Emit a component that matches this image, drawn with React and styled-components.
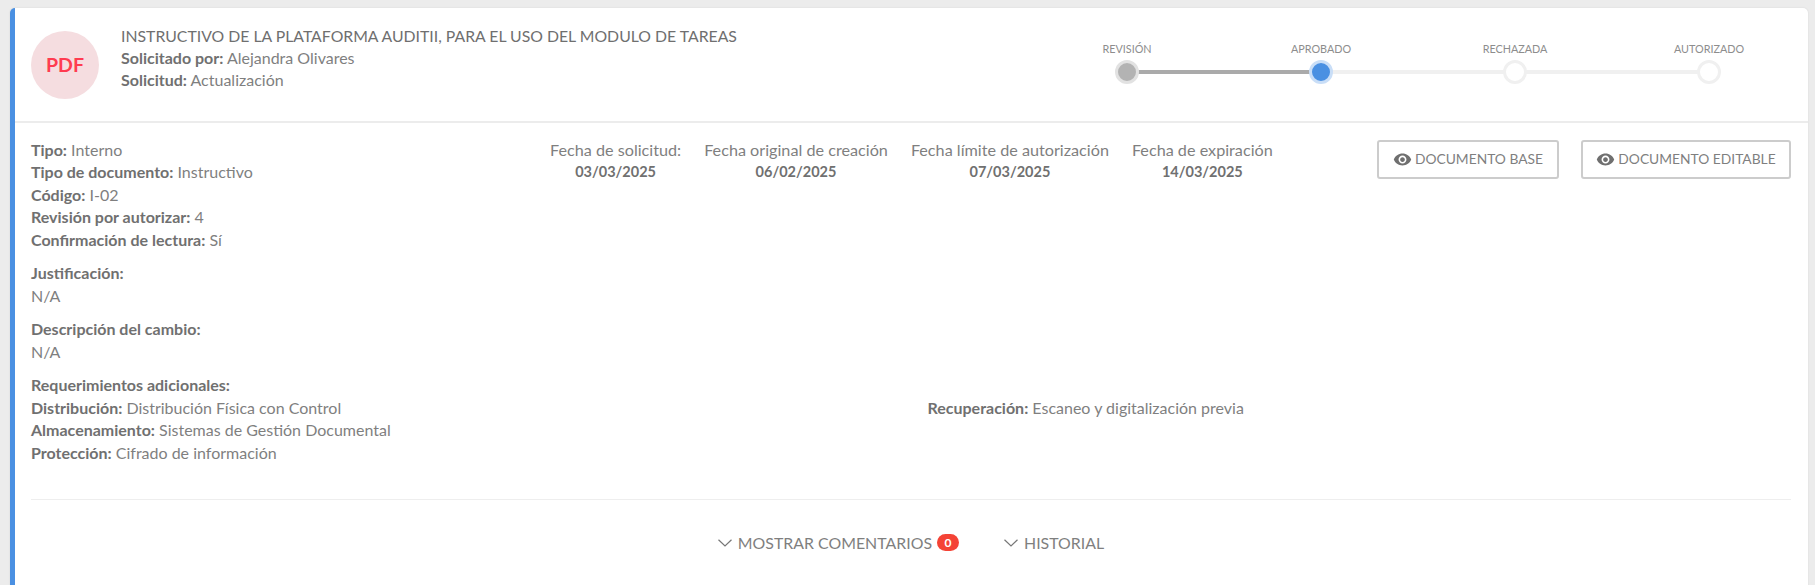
import React from 'react';
import styled, { createGlobalStyle } from 'styled-components';
import { MdRemoveRedEye } from 'react-icons/md';

const GlobalStyle = createGlobalStyle`
  html, body {
    margin: 0;
    height: 100%;
    overflow: hidden;
    background: #ececec;
    font-family: Lato, "Open Sans", sans-serif;
    font-size: 16px;
    line-height: 22.5px;
    color: #7f7f7f;
  }
`;

const Card = styled.section`
  margin: 8px 7px 0 10px;
  height: 600px;
  background: #fff;
  border-left: 5px solid #4a90e2;
  border-radius: 5px 5px 0 0;
  box-shadow: 0 0 2px rgba(0, 0, 0, 0.1);
`;

const Header = styled.header`
  padding: 17px 2px 0 16px;
  height: 96px;
  display: flex;
  border-bottom: 2px solid #ececec;
`;

const FileBadge = styled.div`
  width: 68px;
  height: 68px;
  margin: 6px 22px 0 0;
  border-radius: 50%;
  background: #f5dde0;
  color: #ff3b50;
  font-size: 19.5px;
  font-weight: 700;
  display: flex;
  align-items: center;
  justify-content: center;
`;

const Heading = styled.div`
  flex: 1;
  line-height: 22px;
`;

const Title = styled.div`
  color: #6f6f6f;
  font-size: 15.8px;
`;

const Label = styled.strong`
  color: #707070;
  font-weight: 700;
`;

const Stepper = styled.ol`
  list-style: none;
  margin: 0;
  padding: 16px 0 0;
  display: grid;
  grid-template-columns: repeat(4, 194px);
`;

const Step = styled.li`
  position: relative;
  display: flex;
  flex-direction: column;
  align-items: center;
  font-size: 10.8px;
  line-height: 16px;
  color: #8d8d8d;

  &::before {
    content: '';
    display: ${(props) => (props.last ? 'none' : 'block')};
    position: absolute;
    top: 29px;
    left: 50%;
    width: 100%;
    height: 4px;
    background: ${(props) => (props.done ? '#aaaaaa' : '#f0f0f0')};
  }
`;

const stepColors = {
  done: { fill: '#b3b3b3', ring: '#e2e2e2' },
  active: { fill: '#4a90e2', ring: '#c9def7' },
  idle: { fill: '#ffffff', ring: '#f0f0f0' },
};

const Dot = styled.span`
  position: relative;
  width: 18px;
  height: 18px;
  margin-top: 3px;
  border-radius: 50%;
  background: ${(props) => stepColors[props.state].fill};
  border: 3px solid ${(props) => stepColors[props.state].ring};
`;

const Body = styled.div`
  padding: 15.5px 17px 0 16px;
`;

const TopRow = styled.div`
  display: flex;
  align-items: flex-start;
`;

const InfoList = styled.div`
  width: 519px;
`;

const Dates = styled.div`
  display: flex;
  gap: 23px;
`;

const DateItem = styled.div`
  font-size: 16.2px;
  text-align: center;
`;

const DateValue = styled.div`
  color: #707070;
  font-size: 14.5px;
  font-weight: 700;
`;

const Actions = styled.div`
  margin-left: auto;
  margin-top: 1.5px;
  display: flex;
  gap: 22px;
`;

const OutlineButton = styled.button`
  height: 39px;
  padding: 0;
  width: ${(props) => props.w}px;
  border: 2px solid #cccccc;
  border-radius: 3px;
  background: #fff;
  color: #7f7f7f;
  font: inherit;
  font-size: 13.8px;
  display: flex;
  align-items: center;
  justify-content: center;
  gap: 3px;

  svg {
    font-size: 19px;
    color: #6f6f6f;
  }
`;

const Block = styled.div`
  margin-top: 11px;
`;

const TwoCols = styled.div`
  display: grid;
  grid-template-columns: 1fr 1fr;
  column-gap: 33px;
`;

const Divider = styled.hr`
  margin: 34.5px 0 0;
  border: 0;
  border-top: 1px solid #eeeeee;
`;

const Footer = styled.div`
  padding-top: 32px;
  display: flex;
  justify-content: center;
  gap: 45px;
`;

const Toggle = styled.button`
  padding: 0;
  border: 0;
  background: none;
  color: #7f7f7f;
  font: inherit;
  font-size: 15.9px;
  display: flex;
  align-items: center;
  gap: 6px;
`;

const CountBadge = styled.span`
  width: 22px;
  height: 17px;
  margin-left: -1px;
  border-radius: 9px;
  background: #f44336;
  color: #fff;
  font-size: 12px;
  font-weight: 700;
  line-height: 17px;
  text-align: center;
`;

function Chevron() {
  return (
    <svg width="14" height="8" viewBox="0 0 14 8" fill="none" stroke="#777" strokeWidth="1.2">
      <path d="M0.5 0.8 L7 7 L13.5 0.8" />
    </svg>
  );
}

const steps = [
  { name: 'REVISIÓN', state: 'done' },
  { name: 'APROBADO', state: 'active' },
  { name: 'RECHAZADA', state: 'idle' },
  { name: 'AUTORIZADO', state: 'idle' },
];

const dates = [
  ['Fecha de solicitud:', '03/03/2025'],
  ['Fecha original de creación', '06/02/2025'],
  ['Fecha límite de autorización', '07/03/2025'],
  ['Fecha de expiración', '14/03/2025'],
];

const info = [
  ['Tipo:', 'Interno'],
  ['Tipo de documento:', 'Instructivo'],
  ['Código:', 'I-02'],
  ['Revisión por autorizar:', '4'],
  ['Confirmación de lectura:', 'Sí'],
];

function Field({ label, value }) {
  return (
    <div>
      <Label>{label}</Label>
      {` ${value}`}
    </div>
  );
}

export default function App() {
  return (
    <>
      <GlobalStyle />
      <Card>
        <Header>
          <FileBadge>PDF</FileBadge>
          <Heading>
            <Title>INSTRUCTIVO DE LA PLATAFORMA AUDITII, PARA EL USO DEL MODULO DE TAREAS</Title>
            <Field label="Solicitado por:" value="Alejandra Olivares" />
            <Field label="Solicitud:" value="Actualización" />
          </Heading>
          <Stepper>
            {steps.map((step, i) => (
              <Step key={step.name} done={step.state === 'done'} last={i === steps.length - 1}>
                {step.name}
                <Dot state={step.state} />
              </Step>
            ))}
          </Stepper>
        </Header>
        <Body>
          <TopRow>
            <InfoList>
              {info.map(([label, value]) => (
                <Field key={label} label={label} value={value} />
              ))}
            </InfoList>
            <Dates>
              {dates.map(([label, value]) => (
                <DateItem key={label}>
                  {label}
                  <DateValue>{value}</DateValue>
                </DateItem>
              ))}
            </Dates>
            <Actions>
              <OutlineButton type="button" w={182}>
                <MdRemoveRedEye />
                DOCUMENTO BASE
              </OutlineButton>
              <OutlineButton type="button" w={210}>
                <MdRemoveRedEye />
                DOCUMENTO EDITABLE
              </OutlineButton>
            </Actions>
          </TopRow>
          <Block>
            <Label>Justificación:</Label>
            <div>N/A</div>
          </Block>
          <Block>
            <Label>Descripción del cambio:</Label>
            <div>N/A</div>
          </Block>
          <Block>
            <Label>Requerimientos adicionales:</Label>
            <TwoCols>
              <div>
                <Field label="Distribución:" value="Distribución Física con Control" />
                <Field label="Almacenamiento:" value="Sistemas de Gestión Documental" />
                <Field label="Protección:" value="Cifrado de información" />
              </div>
              <Field label="Recuperación:" value="Escaneo y digitalización previa" />
            </TwoCols>
          </Block>
          <Divider />
          <Footer>
            <Toggle type="button">
              <Chevron />
              MOSTRAR COMENTARIOS
              <CountBadge>0</CountBadge>
            </Toggle>
            <Toggle type="button">
              <Chevron />
              HISTORIAL
            </Toggle>
          </Footer>
        </Body>
      </Card>
    </>
  );
}
